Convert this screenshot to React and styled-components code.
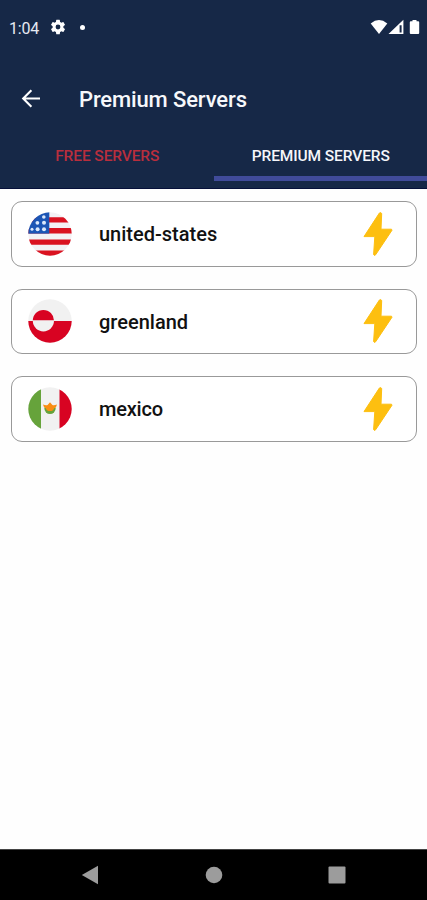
import React from 'react';
import styled, {createGlobalStyle} from 'styled-components';

const servers = [
    {name: 'united-states', flag: 'us', spacing: '0'},
    {name: 'greenland', flag: 'gl', spacing: '0'},
    {name: 'mexico', flag: 'mx', spacing: '-0.2px'},
];

const UsFlag = () => (
    <svg width="44" height="44" viewBox="0 0 44 44">
        <clipPath id="us"><circle cx="22" cy="22" r="21.7"/></clipPath>
        <g clipPath="url(#us)">
            <rect width="44" height="44" fill="#f3f1f4"/>
            <path d="M0 5.3h44v5.200H0zM0 16h44v5.400H0zM0 27.500h44v5.300H0zM0 38.600h44v5.400H0z" fill="#da1220"/>
            <rect width="21.3" height="21.6" fill="#1c55b5"/>
            <g fill="#dbe8fb">
                <circle cx="15.8" cy="5" r="1.8"/>
                <circle cx="9.4" cy="10.8" r="1.9"/>
                <circle cx="16" cy="10.8" r="2"/>
                <circle cx="4" cy="17.2" r="1.5"/>
                <circle cx="9.6" cy="17.2" r="2"/>
                <circle cx="16" cy="17.2" r="2"/>
            </g>
        </g>
    </svg>
);

const GreenlandFlag = () => (
    <svg width="44" height="44" viewBox="0 0 44 44">
        <circle cx="22" cy="22" r="21.7" fill="#f1f1f1"/>
        <path d="M.3 22a21.7 21.7 0 0 0 43.4 0z" fill="#d80322"/>
        <path d="M4.800 21.600a10.600 10.600 0 0 1 21.200 0z" fill="#d80322"/>
        <path d="M4.800 21.600a10.600 10.800 0 0 0 21.200 0z" fill="#f1f1f1"/>
    </svg>
);

const MexicoFlag = () => (
    <svg width="44" height="44" viewBox="0 0 44 44">
        <clipPath id="mx"><circle cx="22" cy="22" r="21.7"/></clipPath>
        <g clipPath="url(#mx)">
            <rect width="44" height="44" fill="#f1f1f1"/>
            <rect width="13" height="44" fill="#66a33b"/>
            <rect x="31.5" width="12.5" height="44" fill="#d80322"/>
        </g>
        <path d="M16.200 20.500a5.800 6.600 0 0 0 11.600 0z" fill="#66a33b"/>
        <path d="M15 17.600q3 1 4.600 .4l2.400-2.800 2.400 2.800q1.600.6 4.600-.4-.4 3-3 3.800-.8 2.600-4 2.600t-4-2.600q-2.600-.8-3-3.800z" fill="#f98d13"/>
    </svg>
);

const flags = {us: UsFlag, gl: GreenlandFlag, mx: MexicoFlag};

const Bolt = () => (
    <svg width="30" height="46" viewBox="0 0 30 46">
        <path d="M16.400 2 1 25.600H11.800L10.600 43.600q.8 1.600 2 .2L29 19.200 28.500 18.200H18L18.700 2.500Q17.600 .8 16.400 2z"
              fill="#fdbf10" stroke="#fdbf10" strokeWidth="1" strokeLinejoin="round"/>
    </svg>
);

const App = () => {
    return (
        <Screen>
            <GlobalStyle/>
            <Header>
                <StatusBar>
                    <Time>1:04</Time>
                    <svg width="18" height="18" viewBox="0 0 24 24" fill="#fff">
                        <path d="M19.14 12.94c.04-.3.06-.61.06-.94s-.02-.64-.07-.94l2.030-1.580a.49.49 0 0 0 .12-.61l-1.920-3.320a.49.49 0 0 0-.59-.22l-2.390.96a7.030 7.030 0 0 0-1.620-.94l-.36-2.540a.48.48 0 0 0-.48-.41h-3.840a.48.48 0 0 0-.47.41l-.36 2.540c-.59.24-1.130.57-1.620.94l-2.390-.96a.48.48 0 0 0-.59.22L2.740 8.870a.47.47 0 0 0 .12.61l2.030 1.580a7.300 7.300 0 0 0 0 1.880l-2.030 1.580a.49.49 0 0 0-.12.61l1.920 3.320c.12.22.37.29.59.22l2.390-.96c.5.38 1.030.7 1.620.94l.36 2.540c.05.24.24.41.48.41h3.840c.24 0 .44-.17.47-.41l.36-2.540a7 7 0 0 0 1.620-.94l2.390.96c.22.08.47 0 .59-.22l1.920-3.320a.47.47 0 0 0-.12-.61zM12 15.200a3.200 3.200 0 1 1 0-6.400 3.200 3.200 0 0 1 0 6.400z"/>
                    </svg>
                    <Dot/>
                    <Signals width="50" height="16" viewBox="0 0 50 16" fill="#fff">
                        <path d="M.7 4.400Q9 -2.400 17.300 4.400L9 15z"/>
                        <path fillRule="evenodd" d="M18.500 15 33.400.8V15zM29.600 6.200V13.600H31.600V6.200z"/>
                        <path d="M42.500 1h4v1.200h1.700q1 0 1 1V14q0 1-1 1h-7.400q-1 0-1-1V3.200q0-1 1-1h1.700z"/>
                    </Signals>
                </StatusBar>
                <Toolbar>
                    <svg width="20" height="20" viewBox="0 0 20 20" fill="none" stroke="#fff" strokeWidth="2.100">
                        <path d="M19 9.500H2.600M10.400 1.300 2.200 9.500l8.200 8.200"/>
                    </svg>
                    <h1>Premium Servers</h1>
                </Toolbar>
                <Tabs>
                    <Tab $color="#b92e3d">FREE SERVERS</Tab>
                    <Tab $color="#f5f6fa" $active>PREMIUM SERVERS</Tab>
                </Tabs>
            </Header>
            <ServerList>
                {servers.map(({name, flag, spacing}) => {
                    const Flag = flags[flag];
                    return (
                        <ServerCard key={name}>
                            <Flag/>
                            <ServerName $spacing={spacing}>{name}</ServerName>
                            <Bolt/>
                        </ServerCard>
                    );
                })}
            </ServerList>
            <NavBar>
                <svg width="18" height="20" viewBox="0 0 18 20"><path d="M17 .8v18.400L.8 10z"/></svg>
                <svg width="18" height="18" viewBox="0 0 18 18"><circle cx="9" cy="9" r="8.300"/></svg>
                <svg width="18" height="18" viewBox="0 0 18 18"><rect x=".5" y=".5" width="17" height="17" rx="1"/></svg>
            </NavBar>
        </Screen>
    );
};

const GlobalStyle = createGlobalStyle`
    * {
        margin: 0;
        padding: 0;
        box-sizing: border-box;
    }
    body {
        font-family: Roboto, sans-serif;
    }
    svg {
        display: block;
        flex-shrink: 0;
    }
`;

const Screen = styled.div`
    display: flex;
    flex-direction: column;
    width: 100%;
    height: 100vh;
    background: #fefefe;
    overflow: hidden;
`;

const Header = styled.header`
    display: flex;
    flex-direction: column;
    height: 189px;
    background: #162847;
    border-bottom: 1px solid #06103a;
    flex-shrink: 0;
`;

const StatusBar = styled.div`
    display: flex;
    align-items: center;
    height: 54px;
    padding: 0 7px 0 9px;
`;

const Time = styled.span`
    width: 40px;
    padding-top: 2px;
    font-size: 16px;
    letter-spacing: -0.2px;
    color: #e6eaf2;
`;

const Dot = styled.span`
    width: 5px;
    height: 5px;
    margin-left: 13px;
    border-radius: 50%;
    background: #fff;
`;

const Signals = styled.svg`
    margin-left: auto;
`;

const Toolbar = styled.div`
    display: flex;
    align-items: center;
    height: 82px;
    padding: 7px 0 0 21px;
    h1 {
        margin-left: 38px;
        padding-top: 2px;
        font-size: 22px;
        font-weight: 500;
        letter-spacing: -0.13px;
        color: #f7f8fb;
        white-space: nowrap;
    }
`;

const Tabs = styled.nav`
    display: grid;
    grid-template-columns: 1fr 1fr;
    height: 45px;
`;

const Tab = styled.div`
    display: flex;
    align-items: center;
    justify-content: center;
    height: 45px;
    padding-left: 1px;
    border-bottom: 5px solid ${({$active}) => ($active ? '#404b9a' : 'transparent')};
    font-size: 15.5px;
    font-weight: 500;
    letter-spacing: -0.1px;
    color: ${({$color}) => $color};
    white-space: nowrap;
`;

const ServerList = styled.main`
    display: flex;
    flex-direction: column;
    gap: 22px;
    flex: 1;
    padding: 12px 10px 0 11px;
`;

const ServerCard = styled.div`
    display: flex;
    align-items: center;
    height: 65.5px;
    padding: 0 23px 0 16px;
    border: 1px solid #999;
    border-radius: 11px;
    background: #fff;
`;

const ServerName = styled.span`
    flex: 1;
    margin-left: 27px;
    padding-top: 1px;
    font-size: 20px;
    font-weight: 500;
    letter-spacing: ${({$spacing}) => $spacing};
    color: #111;
`;

const NavBar = styled.footer`
    display: flex;
    align-items: center;
    justify-content: space-between;
    height: 51px;
    padding: 0 81px;
    border-top: 1px solid #444;
    background: #000;
    flex-shrink: 0;
    svg {
        fill: #9c9c9c;
    }
`;

export default App;
